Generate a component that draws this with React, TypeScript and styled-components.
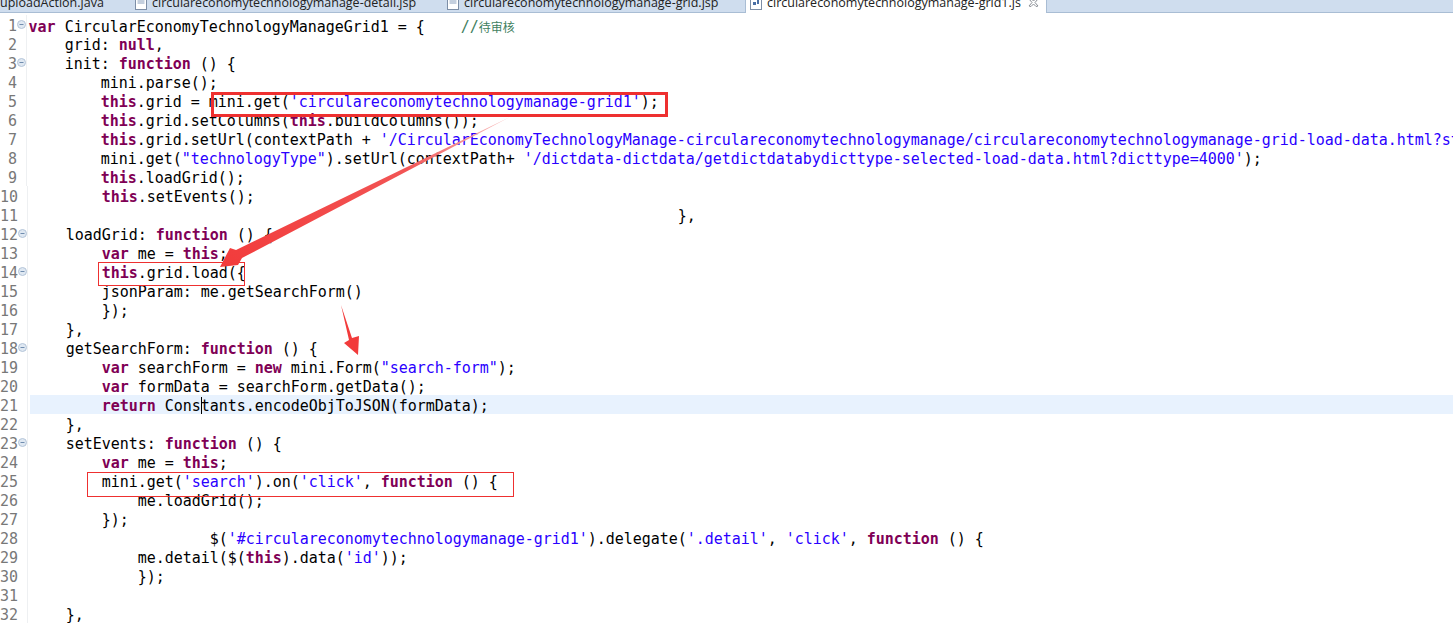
import React from "react";
import styled, { createGlobalStyle } from "styled-components";

const GlobalStyle = createGlobalStyle`
	html, body {
		margin: 0;
		padding: 0;
		background: #fff;
		overflow: hidden;
	}
`;

const K = styled.span`
	color: #7f0055;
	font-weight: 700;
`;
const S = styled.span`
	color: #2a00ff;
`;
const C = styled.span`
	color: #3f7f5f;
`;
const Cjk = styled.span`
	font-family: "Noto Sans CJK SC", sans-serif;
	font-size: 12px;
	letter-spacing: 0;
`;
const CaretMark = styled.span`
	display: inline-block;
	width: 0;
	height: 17px;
	border-left: 1px solid #000;
	margin-right: -1px;
	vertical-align: -3px;
`;

interface CodeLine {
	content?: React.ReactNode;
	fold?: boolean;
	current?: boolean;
}

const pad = (n: number) => " ".repeat(n);

const lines: CodeLine[] = [
	{
		fold: true,
		content: (
			<>
				<K>var</K> CircularEconomyTechnologyManageGrid1 = {"{"}
				{pad(4)}
				<C>//<Cjk>待审核</Cjk></C>
			</>
		),
	},
	{ content: <>{pad(4)}grid: <K>null</K>,</> },
	{ fold: true, content: <>{pad(4)}init: <K>function</K> () {"{"}</> },
	{ content: <>{pad(8)}mini.parse();</> },
	{ content: <>{pad(8)}<K>this</K>.grid = mini.get(<S>'circulareconomytechnologymanage-grid1'</S>);</> },
	{ content: <>{pad(8)}<K>this</K>.grid.setColumns(<K>this</K>.buildColumns());</> },
	{
		content: (
			<>
				{pad(8)}<K>this</K>.grid.setUrl(contextPath + <S>'/CircularEconomyTechnologyManage-circulareconomytechnologymanage/circulareconomytechnologymanage-grid-load-data.html?status=1'</S>);
			</>
		),
	},
	{
		content: (
			<>
				{pad(8)}mini.get(<S>"technologyType"</S>).setUrl(contextPath+ <S>'/dictdata-dictdata/getdictdatabydicttype-selected-load-data.html?dicttype=4000'</S>);
			</>
		),
	},
	{ content: <>{pad(8)}<K>this</K>.loadGrid();</> },
	{ content: <>{pad(8)}<K>this</K>.setEvents();</> },
	{ content: <>{pad(72)}{"},"}</> },
	{ fold: true, content: <>{pad(4)}loadGrid: <K>function</K> () {"{"}</> },
	{ content: <>{pad(8)}<K>var</K> me = <K>this</K>;</> },
	{ fold: true, content: <>{pad(8)}<K>this</K>.grid.load{"({"}</> },
	{ content: <>{pad(8)}jsonParam: me.getSearchForm()</> },
	{ content: <>{pad(8)}{"});"}</> },
	{ content: <>{pad(4)}{"},"}</> },
	{ fold: true, content: <>{pad(4)}getSearchForm: <K>function</K> () {"{"}</> },
	{ content: <>{pad(8)}<K>var</K> searchForm = <K>new</K> mini.Form(<S>"search-form"</S>);</> },
	{ content: <>{pad(8)}<K>var</K> formData = searchForm.getData();</> },
	{ current: true, content: <>{pad(8)}<K>return</K> Cons<CaretMark />tants.encodeObjToJSON(formData);</> },
	{ content: <>{pad(4)}{"},"}</> },
	{ fold: true, content: <>{pad(4)}setEvents: <K>function</K> () {"{"}</> },
	{ content: <>{pad(8)}<K>var</K> me = <K>this</K>;</> },
	{ content: <>{pad(8)}mini.get(<S>'search'</S>).on(<S>'click'</S>, <K>function</K> () {"{"}</> },
	{ content: <>{pad(12)}me.loadGrid();</> },
	{ content: <>{pad(8)}{"});"}</> },
	{
		content: (
			<>
				{pad(20)}$(<S>'#circulareconomytechnologymanage-grid1'</S>).delegate(<S>'.detail'</S>, <S>'click'</S>, <K>function</K> () {"{"}
			</>
		),
	},
	{ content: <>{pad(12)}me.detail($(<K>this</K>).data(<S>'id'</S>));</> },
	{ content: <>{pad(12)}{"});"}</> },
	{},
	{ content: <>{pad(4)}{"},"}</> },
];

function FileIcon({ js }: { js?: boolean }) {
	return (
		<svg width="12" height="16" viewBox="0 0 12 16">
			<rect x="0.5" y="0.5" width="11" height="15" fill="#fff" stroke="#7d8ea6" />
			{js ? (
				<path d="M3 3h3v3H3zM7 6h2v4H7zM3 8h3v3H3z" fill="#4a6fa5" />
			) : (
				<path d="M2.5 3h7M2.5 5h7M2.5 7h7M2.5 9h7" stroke="#8aa0bd" fill="none" />
			)}
		</svg>
	);
}

export default function App() {
	return (
		<>
			<GlobalStyle />
			<Page>
				<TabBar>
					<Tab $width={119} $offset={0}>
						<TabLabel>uploadAction.java</TabLabel>
					</Tab>
					<Tab $width={313} $offset={16}>
						<FileIcon />
						<TabLabel>circulareconomytechnologymanage-detail.jsp</TabLabel>
					</Tab>
					<Tab $width={313} $offset={15}>
						<FileIcon />
						<TabLabel>circulareconomytechnologymanage-grid.jsp</TabLabel>
					</Tab>
					<Tab $width={302} $offset={4} $active>
						<FileIcon js />
						<TabLabel>circulareconomytechnologymanage-grid1.js</TabLabel>
						<CloseIcon width="11" height="9" viewBox="0 0 11 9">
							<path d="M1 1l2-.5 2.500 2.500L8 .5l2 .5-3 3.500 3 3.500-2 .5L5.500 6 3 8.500l-2-.5 3-3.500z" fill="none" stroke="#8a8f96" />
						</CloseIcon>
					</Tab>
				</TabBar>
				<Editor>
					{lines.map((line, index) => (
						<Row key={index}>
							<LineNumber>{index + 1}</LineNumber>
							<FoldCell>
								{line.fold && (
									<svg width="9" height="9" viewBox="0 0 9 9">
										<circle cx="4.500" cy="4.500" r="4" fill="#dfe8f2" stroke="#b4c5d8" />
										<path d="M2.500 4.500h4" stroke="#6f8cae" />
									</svg>
								)}
							</FoldCell>
							<Code $current={line.current}>{line.content}</Code>
						</Row>
					))}
					<Frame $x={211} $y={79} $w={457} $h={25} $weight={3} />
					<Frame $x={98} $y={249} $w={147} $h={24} $weight={1} />
					<Frame $x={87} $y={459} $w={427} $h={25} $weight={1} />
					<Arrows viewBox="0 0 1453 610">
						<defs>
							<linearGradient id="tail" x1="1" y1="0" x2="0" y2="1">
								<stop offset="0" stopColor="#f9c4c4" />
								<stop offset="0.35" stopColor="#f25555" />
								<stop offset="1" stopColor="#f23b3b" />
							</linearGradient>
						</defs>
						<polygon
							points="510,104 242,245 238,252 220,254 230,235 236,237"
							fill="url(#tail)"
						/>
						<polygon
							points="341,292 352,325 359,323 358,342 344,330 349,327"
							fill="#f23b3b"
						/>
					</Arrows>
				</Editor>
			</Page>
		</>
	);
}

const Page = styled.div`
	width: 1453px;
	height: 623px;
	overflow: hidden;
	background: #fff;
	display: flex;
	flex-direction: column;
`;

const TabBar = styled.div`
	flex: 0 0 13px;
	height: 13px;
	display: flex;
	align-items: flex-end;
	background: #cfddee;
	border-bottom: 1px solid #a9bdd4;
	box-sizing: border-box;
`;

const Tab = styled.div<{ $width: number; $offset: number; $active?: boolean }>`
	flex: 0 0 ${(p) => p.$width}px;
	height: 22px;
	margin-bottom: -1px;
	box-sizing: border-box;
	display: flex;
	align-items: center;
	gap: 5px;
	padding-left: ${(p) => p.$offset}px;
	font-family: "Open Sans", "Liberation Sans", sans-serif;
	font-size: 12.5px;
	color: #222;
	white-space: nowrap;
	background: ${(p) => (p.$active ? "#fff" : "transparent")};
	border-left: ${(p) => (p.$active ? "1px solid #a9bdd4" : "none")};
	border-right: ${(p) => (p.$active ? "1px solid #a9bdd4" : "none")};
`;

const TabLabel = styled.span`
	display: block;
`;

const CloseIcon = styled.svg`
	margin-left: 2px;
`;

const Editor = styled.div`
	position: relative;
	padding-top: 2px;
	flex: 1;
`;

const Row = styled.div`
	display: flex;
	height: 19px;
`;

const LineNumber = styled.div`
	flex: 0 0 17px;
	height: 19px;
	text-align: right;
	font-family: "DejaVu Sans Mono", monospace;
	font-size: 15px;
	line-height: 23px;
	color: #787878;
	white-space: nowrap;
	direction: rtl;
`;

const FoldCell = styled.div`
	flex: 0 0 12px;
	box-sizing: border-box;
	padding-top: 5px;
	display: flex;
	align-items: flex-start;
	background: linear-gradient(to right, #fff 9px, #eef0f2 9px, #eef0f2 10px, #fff 10px);
`;

const Code = styled.pre<{ $current?: boolean }>`
	flex: 1;
	min-width: 0;
	height: 19px;
	margin: 0;
	text-indent: -0.4px;
	font-family: "DejaVu Sans Mono", monospace;
	font-size: 15px;
	letter-spacing: -0.03px;
	line-height: 23px;
	white-space: pre;
	color: #000;
	background: ${(p) => (p.$current ? "#e8f2fe" : "transparent")};
`;

const Frame = styled.div<{ $x: number; $y: number; $w: number; $h: number; $weight: number }>`
	position: absolute;
	box-sizing: border-box;
	left: ${(p) => p.$x}px;
	top: ${(p) => p.$y}px;
	width: ${(p) => p.$w}px;
	height: ${(p) => p.$h}px;
	border: ${(p) => p.$weight}px solid #ee3030;
`;

const Arrows = styled.svg`
	position: absolute;
	left: 0;
	top: 0;
	width: 1453px;
	height: 610px;
	pointer-events: none;
`;
